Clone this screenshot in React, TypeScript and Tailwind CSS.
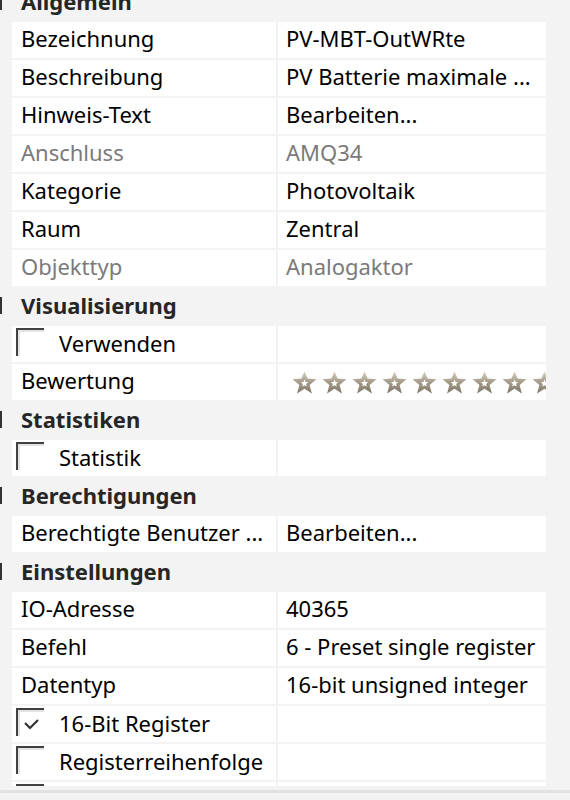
import React from 'react';

type Row =
  | { kind: 'header'; label: string }
  | { kind: 'prop'; label: string; value?: string; disabled?: boolean; stars?: boolean }
  | { kind: 'check'; label: string; checked?: boolean };

const rows: Row[] = [
  { kind: 'header', label: 'Allgemein' },
  { kind: 'prop', label: 'Bezeichnung', value: 'PV-MBT-OutWRte' },
  { kind: 'prop', label: 'Beschreibung', value: 'PV Batterie maximale ...' },
  { kind: 'prop', label: 'Hinweis-Text', value: 'Bearbeiten...' },
  { kind: 'prop', label: 'Anschluss', value: 'AMQ34', disabled: true },
  { kind: 'prop', label: 'Kategorie', value: 'Photovoltaik' },
  { kind: 'prop', label: 'Raum', value: 'Zentral' },
  { kind: 'prop', label: 'Objekttyp', value: 'Analogaktor', disabled: true },
  { kind: 'header', label: 'Visualisierung' },
  { kind: 'check', label: 'Verwenden' },
  { kind: 'prop', label: 'Bewertung', stars: true },
  { kind: 'header', label: 'Statistiken' },
  { kind: 'check', label: 'Statistik' },
  { kind: 'header', label: 'Berechtigungen' },
  { kind: 'prop', label: 'Berechtigte Benutzer ...', value: 'Bearbeiten...' },
  { kind: 'header', label: 'Einstellungen' },
  { kind: 'prop', label: 'IO-Adresse', value: '40365' },
  { kind: 'prop', label: 'Befehl', value: '6 - Preset single register' },
  { kind: 'prop', label: 'Datentyp', value: '16-bit unsigned integer' },
  { kind: 'check', label: '16-Bit Register', checked: true },
  { kind: 'check', label: 'Registerreihenfolge' },
  { kind: 'check', label: '' },
];

const Star = () => (
  <svg width="25" height="23" viewBox="0 0 25 23" className="shrink-0">
    <defs>
      <linearGradient id="starGrad" x1="0" y1="0" x2="0" y2="1">
        <stop offset="0" stopColor="#d8d0c0" />
        <stop offset="0.5" stopColor="#a39a88" />
        <stop offset="1" stopColor="#7f7666" />
      </linearGradient>
    </defs>
    <path
      fillRule="evenodd"
      fill="url(#starGrad)"
      d="M12.5 0.5 L15.6 7.6 L24.5 8.3 L17.6 13.9 L19.9 22.5 L12.5 17.8 L5.1 22.5 L7.4 13.9 L0.5 8.3 L9.4 7.6 Z M12.5 8.5 L11.5 11 L8.8 11.2 L10.9 12.9 L10.2 15.6 L12.5 14.2 L14.8 15.6 L14.1 12.9 L16.2 11.2 L13.5 11 Z"
    />
  </svg>
);

const Checkbox = ({ checked }: { checked?: boolean }) => (
  <div className="relative w-[28px] h-[28px] border-t-2 border-l-2 border-[#404040] shrink-0">
    <div className="w-full h-full border-t-2 border-l-2 border-[#e3e3e3]" />
    {checked && (
      <svg width="16" height="14" viewBox="0 0 16 14" className="absolute left-[6px] top-[8px]">
        <polyline points="1,5 6,10 14,2" fill="none" stroke="#333" strokeWidth="2.2" />
      </svg>
    )}
  </div>
);

const RowView = ({ row }: { row: Row }) => {
  if (row.kind === 'header') {
    return (
      <div className="relative h-[36px] mb-[2px] flex items-center pb-[2px]">
        <div className="absolute left-0 top-[9px] w-[2px] h-[17px] bg-[#333]" />
        <span className="pl-[21px] font-bold text-[#262626]">{row.label}</span>
      </div>
    );
  }
  if (row.kind === 'check') {
    return (
      <div className="h-[36px] mb-[2px] flex gap-[2px] pl-[12px]">
        <div className="w-[264px] bg-white flex items-start pt-[2px] pl-[4px] gap-[15px] whitespace-nowrap overflow-hidden">
          <Checkbox checked={row.checked} />
          <span className="leading-[34px] -mt-[2px]">{row.label}</span>
        </div>
        <div className="w-[268px] bg-white" />
      </div>
    );
  }
  const color = row.disabled ? 'text-[#7a7a7a]' : 'text-black';
  return (
    <div className="h-[36px] mb-[2px] flex gap-[2px] pl-[12px]">
      <div className={`w-[264px] bg-white flex items-center pl-[9px] pb-[3px] whitespace-nowrap overflow-hidden ${color}`}>
        {row.label}
      </div>
      <div className={`w-[268px] bg-white flex items-center pl-[8px] whitespace-nowrap overflow-hidden ${color} ${row.stars ? '' : 'pb-[3px]'}`}>
        {row.stars ? (
          <div className="flex gap-[5px] pl-[6px] pt-[1px]">
            {Array.from({ length: 9 }).map((_, i) => (
              <Star key={i} />
            ))}
          </div>
        ) : (
          row.value
        )}
      </div>
    </div>
  );
};

export default function App() {
  return (
    <div
      className="w-[570px] h-[800px] bg-[#f3f3f3] overflow-hidden text-[22px] text-black"
      style={{ fontFamily: '"Noto Sans", "Open Sans", sans-serif' }}
    >
      <div className="h-[786px] overflow-hidden">
        <div className="-mt-[16px]">
          {rows.map((row, i) => (
            <RowView key={i} row={row} />
          ))}
        </div>
      </div>
      <div className="mt-[4px] h-[3px] bg-[#e2e2e2]" />
    </div>
  );
}
